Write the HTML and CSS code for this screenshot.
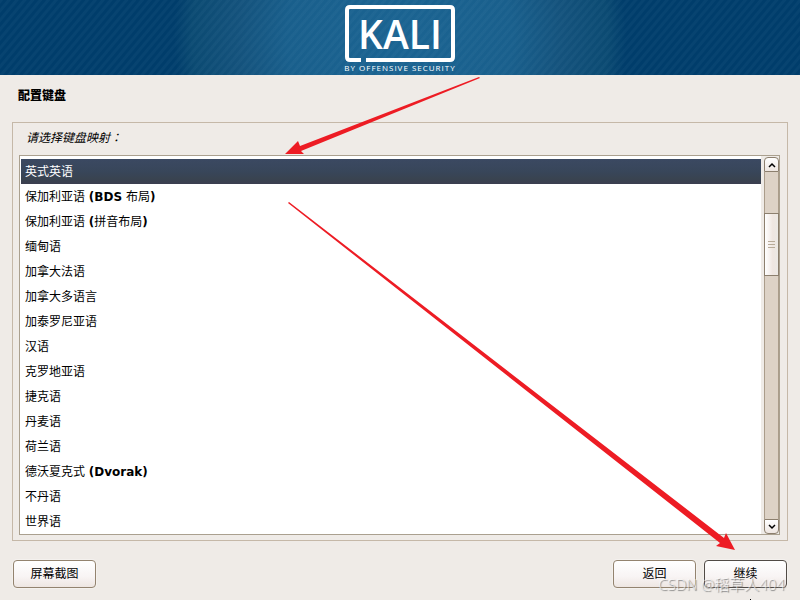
FILE: index.html
```html
<!DOCTYPE html>
<html lang="zh-CN">
<head>
<meta charset="utf-8">
<title>配置键盘</title>
<link rel="stylesheet" href="styles.css">
</head>
<body>
<header class="banner">
  <div class="logo">
    <svg class="logo-frame" viewBox="0 0 112 58" aria-hidden="true">
      <path d="M17 55H6Q3 55 3 52V5Q3 2 6 2H106Q109 2 109 5V52Q109 55 106 55H22" fill="none" stroke="#fff" stroke-width="4"/>
    </svg>
    <span class="logo-name">KALI</span>
    <span class="logo-tag">BY OFFENSIVE SECURITY</span>
  </div>
</header>
<form class="installer">
  <h1 class="title">配置键盘</h1>
  <fieldset class="panel" aria-labelledby="prompt">
    <p class="prompt" id="prompt">请选择键盘映射<span class="colon" lang="zh-TW">：</span></p>
    <div class="listbox">
      <div class="options">
        <label class="option"><input type="radio" name="keymap" checked>英式英语</label>
        <label class="option"><input type="radio" name="keymap">保加利亚语 <b>(BDS</b> 布局<b>)</b></label>
        <label class="option"><input type="radio" name="keymap">保加利亚语 <b>(</b>拼音布局<b>)</b></label>
        <label class="option"><input type="radio" name="keymap">缅甸语</label>
        <label class="option"><input type="radio" name="keymap">加拿大法语</label>
        <label class="option"><input type="radio" name="keymap">加拿大多语言</label>
        <label class="option"><input type="radio" name="keymap">加泰罗尼亚语</label>
        <label class="option"><input type="radio" name="keymap">汉语</label>
        <label class="option"><input type="radio" name="keymap">克罗地亚语</label>
        <label class="option"><input type="radio" name="keymap">捷克语</label>
        <label class="option"><input type="radio" name="keymap">丹麦语</label>
        <label class="option"><input type="radio" name="keymap">荷兰语</label>
        <label class="option"><input type="radio" name="keymap">德沃夏克式 <b>(Dvorak)</b></label>
        <label class="option"><input type="radio" name="keymap">不丹语</label>
        <label class="option"><input type="radio" name="keymap">世界语</label>
      </div>
      <div class="scrollbar">
        <button class="step step-up" type="button" aria-label="向上滚动"><svg viewBox="0 0 8 6"><path d="M1 5L4 2L7 5"/></svg></button>
        <div class="track">
          <div class="thumb"><i></i><i></i><i></i></div>
        </div>
        <button class="step step-down" type="button" aria-label="向下滚动"><svg viewBox="0 0 8 6"><path d="M1 1L4 4L7 1"/></svg></button>
      </div>
    </div>
  </fieldset>
  <footer class="actions">
    <button class="button" type="button">屏幕截图</button>
    <button class="button back" type="button">返回</button>
    <button class="button primary" type="submit">继续</button>
  </footer>
</form>
<svg class="arrows" viewBox="0 0 800 600" aria-hidden="true">
  <path d="M479 77L480 78L301 151L304 154L285 154L298 141L300 146Z"/>
  <path d="M288 203L289 202L724 538L726 533L735 550L716 546L720 543Z"/>
  <path class="pointer" d="M750 599H751V600H750Z"/>
</svg>
<div class="watermark">CSDN @稻草人404</div>
</body>
</html>
```
FILE: styles.css
```css
* {
  box-sizing: border-box;
}

body {
  position: relative;
  display: flex;
  flex-direction: column;
  min-height: 100vh;
  margin: 0;
  overflow: hidden;
  background: #efebe7;
  color: #000;
  font: 12px/24px "DejaVu Sans", "Noto Sans CJK SC", sans-serif;
}

.banner {
  display: flex;
  justify-content: center;
  height: 75px;
  padding-top: 5px;
  background:
    repeating-linear-gradient(130deg, rgba(120, 170, 200, 0.06) 0 2px, transparent 3px 5px, rgba(120, 170, 200, 0.06) 6px),
    radial-gradient(circle 226px at 50% 50%, #1b6492 0, #195f8c 50%, #14527c 72%, #0b4a72 92%, #003d6b 100%);
}

.logo {
  position: relative;
  display: flex;
  flex-direction: column;
  align-items: center;
  width: 112px;
  color: #fff;
  font-family: "Open Sans", "Noto Sans", sans-serif;
}

.logo-frame {
  position: absolute;
  top: 0;
  left: 0;
  width: 112px;
  height: 58px;
}

.logo-name {
  height: 58px;
  font-size: 39px;
  font-weight: 600;
  line-height: 58px;
}

.logo-tag {
  font-size: 8px;
  font-weight: 400;
  line-height: 10px;
  letter-spacing: 1px;
  white-space: nowrap;
}

.installer {
  display: flex;
  flex: 1;
  flex-direction: column;
  padding: 9px 12px 12px;
}

.title {
  margin: 0 6px 14px;
  font-size: 12px;
  font-weight: 900;
  line-height: 24px;
}

.panel {
  display: flex;
  flex: 1;
  flex-direction: column;
  min-width: 0;
  margin: 0;
  padding: 3px 7px 4px 6px;
  border: 1px solid #c5b8a8;
}

.prompt {
  margin: 0 0 5px 7px;
  font-style: italic;
}

.colon {
  font-family: "Noto Sans CJK TC", sans-serif;
  line-height: 12px;
}

.listbox {
  display: flex;
  flex: 1;
  border: 1px solid #aaa08f;
}

.options {
  flex: 1;
  padding: 3px 0 0 1px;
  background: #fff;
}

.option {
  position: relative;
  display: block;
  height: 25px;
  padding: 1px 0 0 4px;
  line-height: 25px;
}

.option input {
  position: absolute;
  width: 1px;
  height: 1px;
  margin: 0;
  appearance: none;
}

.option:has(input:checked) {
  background: linear-gradient(#3b4962, #38465a 50%, #394350 80%, #3b3e50);
  color: #fff;
}

.scrollbar {
  display: flex;
  flex-direction: column;
  width: 18px;
  padding: 1px 0 0 3px;
}

.step {
  display: flex;
  align-items: center;
  justify-content: center;
  height: 15px;
  padding: 0;
  border: 1px solid #8c7f6e;
  background: linear-gradient(#fff, #eee6e1);
}

.step-up {
  border-radius: 4px 4px 0 0;
}

.step-down {
  border-radius: 0 0 4px 4px;
}

.step svg {
  width: 8px;
  height: 6px;
  fill: none;
  stroke: #000;
  stroke-width: 1.5;
}

.track {
  flex: 1;
  padding-top: 41px;
  border: solid #aa9c8a;
  border-width: 0 1px;
  background: #ddd2c6;
}

.thumb {
  display: flex;
  flex-direction: column;
  align-items: center;
  justify-content: center;
  gap: 2px;
  height: 63px;
  margin: 0 -1px;
  border: 1px solid #8c7f6e;
  background: linear-gradient(90deg, #fff, #efe6e1 60%, #ece9e5);
}

.thumb i {
  width: 7px;
  height: 1px;
  background: #b8ab99;
}

.actions {
  display: flex;
  gap: 8px;
  padding: 19px 1px 0;
}

.button {
  width: 83px;
  height: 28px;
  padding: 0;
  border: 1px solid #93836f;
  border-radius: 4px;
  background: linear-gradient(#fff, #f8f4f4 60%, #eee6e2);
  box-shadow: 0 0 0 1px #f4f1ee;
  color: #000;
  font: inherit;
}

.back {
  margin-left: auto;
}

.primary {
  border-color: #514b46;
}

.arrows {
  position: absolute;
  top: 0;
  left: 0;
  width: 100%;
  height: 100%;
  fill: #ed1c24;
  pointer-events: none;
}

.arrows .pointer {
  fill: #000;
}

.watermark {
  position: absolute;
  right: 15px;
  bottom: 4px;
  color: rgba(255, 255, 255, 0.7);
  font: 300 15px/24px "Open Sans", "Noto Sans CJK SC", sans-serif;
  text-shadow: 1px 1px 1px #777;
  white-space: nowrap;
  pointer-events: none;
}
```
